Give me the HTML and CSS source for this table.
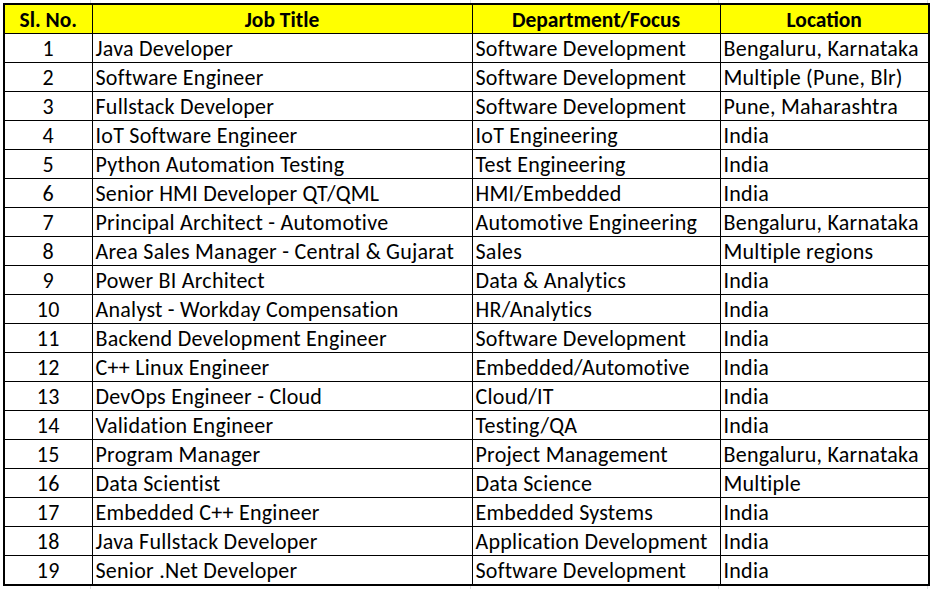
FILE: index.html
```html
<!DOCTYPE html>
<html>
<head>
<meta charset="utf-8">
<link rel="stylesheet" href="styles.css">
</head>
<body>
<div class="grid grid-top"><span class="g1"></span><span class="g2"></span><span class="g3"></span><span class="g4"></span></div>
<table class="jobs">
<colgroup><col class="c1"><col class="c2"><col class="c3"><col class="c4"></colgroup>
<thead>
<tr><th>Sl. No.</th><th>Job Title</th><th>Department/Focus</th><th>Location</th></tr>
</thead>
<tbody>
<tr><td class="num">1</td><td>Java Developer</td><td>Software Development</td><td>Bengaluru, Karnataka</td></tr>
<tr><td class="num">2</td><td>Software Engineer</td><td>Software Development</td><td>Multiple (Pune, Blr)</td></tr>
<tr><td class="num">3</td><td>Fullstack Developer</td><td>Software Development</td><td>Pune, Maharashtra</td></tr>
<tr><td class="num">4</td><td>IoT Software Engineer</td><td>IoT Engineering</td><td>India</td></tr>
<tr><td class="num">5</td><td>Python Automation Testing</td><td>Test Engineering</td><td>India</td></tr>
<tr><td class="num">6</td><td>Senior HMI Developer QT/QML</td><td>HMI/Embedded</td><td>India</td></tr>
<tr><td class="num">7</td><td>Principal Architect - Automotive</td><td>Automotive Engineering</td><td>Bengaluru, Karnataka</td></tr>
<tr><td class="num">8</td><td>Area Sales Manager - Central &amp; Gujarat</td><td>Sales</td><td>Multiple regions</td></tr>
<tr><td class="num">9</td><td>Power BI Architect</td><td>Data &amp; Analytics</td><td>India</td></tr>
<tr><td class="num">10</td><td>Analyst - Workday Compensation</td><td>HR/Analytics</td><td>India</td></tr>
<tr><td class="num">11</td><td>Backend Development Engineer</td><td>Software Development</td><td>India</td></tr>
<tr><td class="num">12</td><td>C++ Linux Engineer</td><td>Embedded/Automotive</td><td>India</td></tr>
<tr><td class="num">13</td><td>DevOps Engineer - Cloud</td><td>Cloud/IT</td><td>India</td></tr>
<tr><td class="num">14</td><td>Validation Engineer</td><td>Testing/QA</td><td>India</td></tr>
<tr><td class="num">15</td><td>Program Manager</td><td>Project Management</td><td>Bengaluru, Karnataka</td></tr>
<tr><td class="num">16</td><td>Data Scientist</td><td>Data Science</td><td>Multiple</td></tr>
<tr><td class="num">17</td><td>Embedded C++ Engineer</td><td>Embedded Systems</td><td>India</td></tr>
<tr><td class="num">18</td><td>Java Fullstack Developer</td><td>Application Development</td><td>India</td></tr>
<tr><td class="num">19</td><td>Senior .Net Developer</td><td>Software Development</td><td>India</td></tr>
</tbody>
</table>
<div class="grid grid-bottom"><span class="g1"></span><span class="g2"></span><span class="g3"></span><span class="g4"></span></div>
</body>
</html>
```
FILE: styles.css
```css
html, body {
  margin: 0;
  padding: 0;
  background: #ffffff;
}
body {
  padding-left: 3px;
  font-family: Carlito, Calibri, Lato, "Open Sans", sans-serif;
  color: #000;
}
.grid {
  display: flex;
  width: 929px;
}
.grid span {
  display: block;
  border-right: 1px solid #dadcdf;
}
.grid-top { height: 3px; }
.grid-bottom { height: 4px; }
.grid .g1 { width: 87px; }
.grid .g2 { width: 379px; }
.grid .g3 { width: 247px; }
.grid .g4 { width: 208px; }
.jobs {
  border-collapse: collapse;
  table-layout: fixed;
  width: 925px;
  border: 2px solid #000;
  font-size: 22px;
  letter-spacing: 0.25px;
}
.c1 { width: 88px; }
.c2 { width: 380px; }
.c3 { width: 248px; }
.c4 { width: 209px; }
.jobs th, .jobs td {
  border: 1px solid #000;
  padding: 2px 3px 0 3px;
  white-space: nowrap;
  overflow: hidden;
  line-height: 22px;
}
.jobs th {
  background: #ffff00;
  font-weight: bold;
  font-size: 21.5px;
  letter-spacing: 0;
  text-align: center;
  height: 26px;
}
.jobs td {
  height: 26px;
  text-align: left;
}
.jobs td.num {
  text-align: center;
}
```
